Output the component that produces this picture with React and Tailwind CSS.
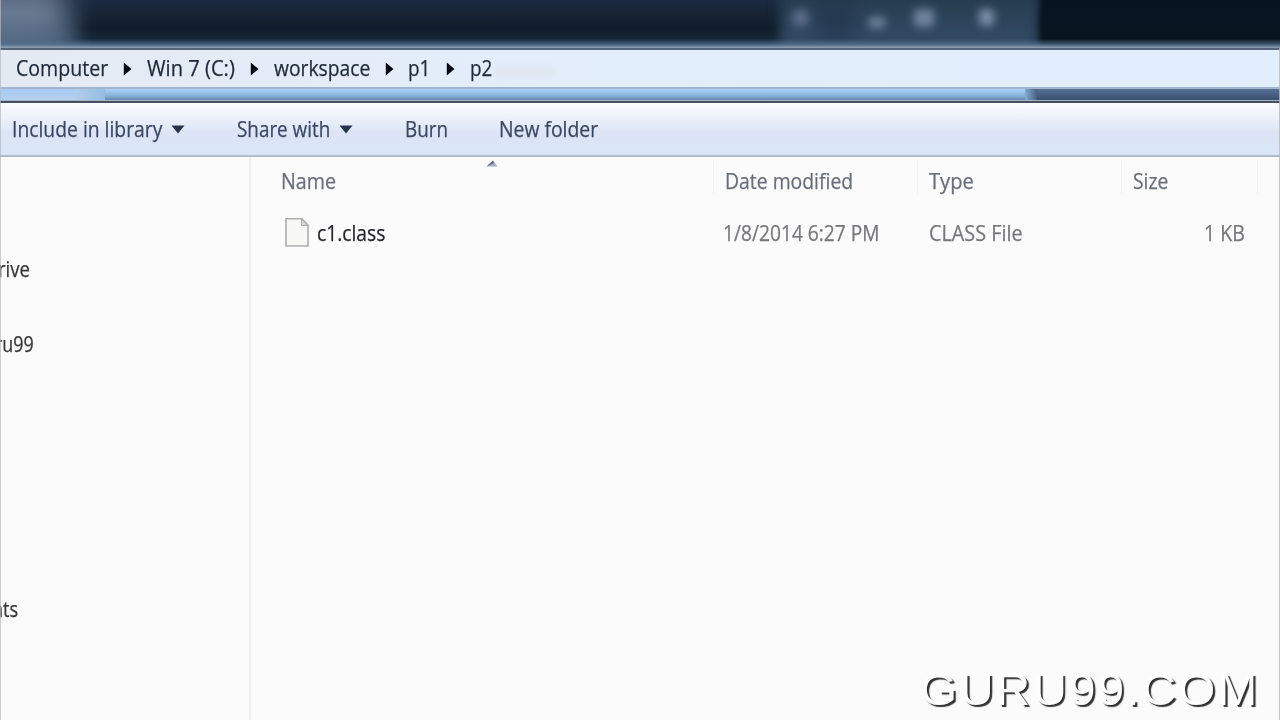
import { useLayoutEffect, useRef, useState } from "react";

// Text condensed horizontally so that it fills exactly the given width.
function Label({ width, className = "", children }) {
  const ref = useRef(null);
  const [scale, setScale] = useState(1);
  useLayoutEffect(() => {
    setScale(width / ref.current.offsetWidth);
  }, [width]);
  return (
    <span className={"flex shrink-0 " + className} style={{ width }}>
      <span
        ref={ref}
        className="block w-max shrink-0 origin-left whitespace-nowrap"
        style={{ transform: `scaleX(${scale})` }}
      >
        {children}
      </span>
    </span>
  );
}

function Crumb({ width, children, gap }) {
  return (
    <>
      <Label width={width}>{children}</Label>
      {gap && (
        <span className={"flex justify-center " + gap}>
          <svg className="mt-px h-[14px] w-[9px]" viewBox="0 0 9 14">
            <path d="M0.8 0.5 L8.5 7 L0.8 13.5Z" fill="#050a12" />
          </svg>
        </span>
      )}
    </>
  );
}

function DownArrow() {
  return (
    <svg className="ml-[9px] h-[9px] w-[14px]" viewBox="0 0 14 9">
      <path d="M0.5 0.5H13.5L7 8.5Z" fill="#26334c" />
    </svg>
  );
}

function TitleBar() {
  return (
    <header className="flex h-[48px] shrink-0 bg-linear-to-b from-[#1b2a3f] via-[#101d2b] via-60% to-[#1b3046]">
      <div className="relative flex w-full overflow-hidden">
        <div className="absolute -top-[12px] -left-[40px] h-[52px] w-[110px] rounded-full bg-[#8292ab] opacity-80 blur-[14px]" />
        <div className="absolute top-[24px] -left-[30px] h-[30px] w-[105px] bg-[#647e9b] opacity-60 blur-[10px]" />
        <div className="absolute -top-[8px] left-[780px] h-[60px] w-[258px] rounded-r-lg bg-linear-to-b from-[#263b4d] to-[#364e6b] blur-[6px]" />
        <div className="absolute -top-[6px] left-[1040px] h-[60px] w-[250px] bg-linear-to-b from-[#061421] via-[#081521] via-75% to-[#1b2b3d] blur-[2px]" />
        <div className="absolute top-[2px] left-[818px] h-[38px] w-[36px] bg-[#22344c] opacity-60 blur-[7px]" />
        <div className="absolute top-[9px] left-[792px] h-[18px] w-[17px] rounded-full bg-[#5c6d88] blur-[4px]" />
        <div className="absolute top-[17px] left-[868px] h-[11px] w-[18px] rounded-full bg-[#6e849b] blur-[4px]" />
        <div className="absolute top-[9px] left-[914px] h-[18px] w-[20px] rounded bg-[#70839c] blur-[4px]" />
        <div className="absolute top-[9px] left-[979px] h-[17px] w-[15px] rounded bg-[#7a8ea6] blur-[4px]" />
        <div className="absolute bottom-0 left-0 h-[9px] w-full bg-linear-to-b from-[#5f7f9f]/0 via-[#5a7592]/70 via-60% to-[#8fa3b8]" />
      </div>
    </header>
  );
}

function AddressBar() {
  return (
    <nav className="flex h-[39px] shrink-0 items-center border-t-2 border-[#56647a] bg-linear-to-r from-[#e4eaf2] via-[#e3edfb] via-40% to-[#e1eefd] pb-px pl-[16px] text-[#1f2a38]">
      <Crumb width={92} gap="w-[39px]">Computer</Crumb>
      <Crumb width={88} gap="w-[39px]">Win 7 (C:)</Crumb>
      <Crumb width={96} gap="w-[38px]">workspace</Crumb>
      <Crumb width={22} gap="w-[40px]">p1</Crumb>
      <Crumb width={22}>p2</Crumb>
      <span className="mt-[8px] ml-[2px] h-[12px] w-[62px] bg-[#dfe5ee] opacity-70 blur-[2px]" />
    </nav>
  );
}

function FrameStrip() {
  return (
    <div className="flex h-[16px] shrink-0 flex-col">
      <div className="h-[2px] bg-[#a3b4d0]" />
      <div className="flex h-[11px]">
        <div className="w-[75px] bg-linear-to-b from-[#a9caf4] to-[#b3d0ef]" />
        <div className="w-[30px] bg-linear-to-r from-[#b3cdec] to-[#94bce2]" />
        <div className="w-[920px] bg-linear-to-b from-[#acd1f4] via-[#86b3da] via-60% to-[#6886aa]" />
        <div className="w-[12px] bg-linear-to-r from-[#83add2] to-[#4a6283]" />
        <div className="flex-1 bg-linear-to-b from-[#586f95] to-[#3a5070]" />
      </div>
      <div className="h-px bg-[#a6b2c0]" />
      <div className="h-[2px] bg-[#454f60]" />
    </div>
  );
}

function Toolbar() {
  return (
    <div className="flex h-[54px] shrink-0 items-center border-b-2 border-[#b0bdcd] bg-linear-to-b from-[#fafcff] via-[#dce4f5] via-58% to-[#dae6f8] pl-[12px] text-[#3b4863]">
      <Label width={150}>Include in library</Label>
      <DownArrow />
      <Label width={93} className="ml-[52px]">Share with</Label>
      <DownArrow />
      <Label width={43} className="ml-[52px]">Burn</Label>
      <Label width={99} className="ml-[51px]">New folder</Label>
    </div>
  );
}

function Column({ className, children }) {
  return (
    <div className={"flex h-[34px] items-center border-r border-[#f2f3f5] " + className}>
      {children}
    </div>
  );
}

function FileList() {
  return (
    <section className="flex flex-1 flex-col pt-[3px]">
      <div className="relative flex h-[41px] text-[#6a6d7c]">
        <svg className="absolute top-0 left-[235px] h-[7px] w-[12px]" viewBox="0 0 12 7">
          <path d="M0.5 6.5L7 0.5L11.5 6.5Z" fill="#a1b0c1" />
          <path d="M0.5 6.5L7 0.5L8 3Z" fill="#5d6c80" />
        </svg>
        <Column className="w-[463px] pt-[7px] pl-[30px]"><Label width={55}>Name</Label></Column>
        <Column className="w-[204px] pt-[7px] pl-[11px]"><Label width={128}>Date modified</Label></Column>
        <Column className="w-[204px] pt-[7px] pl-[11px]"><Label width={45}>Type</Label></Column>
        <Column className="w-[136px] pt-[7px] pl-[11px]"><Label width={35}>Size</Label></Column>
      </div>
      <div className="flex h-[64px] items-center pl-[34px] text-[#77777a]">
        <svg className="h-[30px] w-[24px]" viewBox="0 0 24 30">
          <path d="M1 0.8H17L23 7V28H1Z" fill="#f7f7f6" stroke="#adadad" strokeWidth="1.6" />
          <path d="M16.5 1V7.5H23Z" fill="#d5d7d9" stroke="#adadad" />
        </svg>
        <Label width={68} className="ml-[8px] text-[#27252a]">c1.class</Label>
        <Label width={157} className="ml-[338px]">1/8/2014 6:27 PM</Label>
        <Label width={94} className="ml-[49px]">CLASS File</Label>
        <Label width={41} className="ml-[181px]">1 KB</Label>
      </div>
    </section>
  );
}

function Sidebar() {
  return (
    <aside className="flex w-[251px] shrink-0 flex-col border-r-2 border-[#efeff1] pt-[97px] text-[#353535]">
      <Label width={32} className="-ml-[2px] h-[30px]">rive</Label>
      <Label width={39} className="mt-[45px] -ml-[5px] h-[30px]">ru99</Label>
      <Label width={26} className="mt-[235px] -ml-[8px] h-[30px]">nts</Label>
    </aside>
  );
}

export default function App() {
  return (
    <div className="relative flex h-[720px] w-[1280px] flex-col overflow-hidden bg-[#fbfbfc] font-['Open_Sans',sans-serif] text-[21.5px] leading-[30px] [-webkit-text-stroke:0.25px_currentColor]">
      <TitleBar />
      <AddressBar />
      <FrameStrip />
      <Toolbar />
      <main className="flex flex-1">
        <Sidebar />
        <FileList />
      </main>
      <div className="absolute top-[665px] left-[920px] flex font-['Liberation_Sans',sans-serif] text-[44px] leading-[50px] tracking-[2px] text-[#fdfdfd] [-webkit-text-stroke:0px] [text-shadow:2px_2px_1px_#303030]">
        <Label width={339}>GURU99.COM</Label>
      </div>
      <div className="absolute inset-y-0 left-0 w-px bg-[#b5b8bd]/70" />
      <div className="absolute top-[48px] right-0 bottom-0 w-px bg-[#b5b8bd]/80" />
    </div>
  );
}
